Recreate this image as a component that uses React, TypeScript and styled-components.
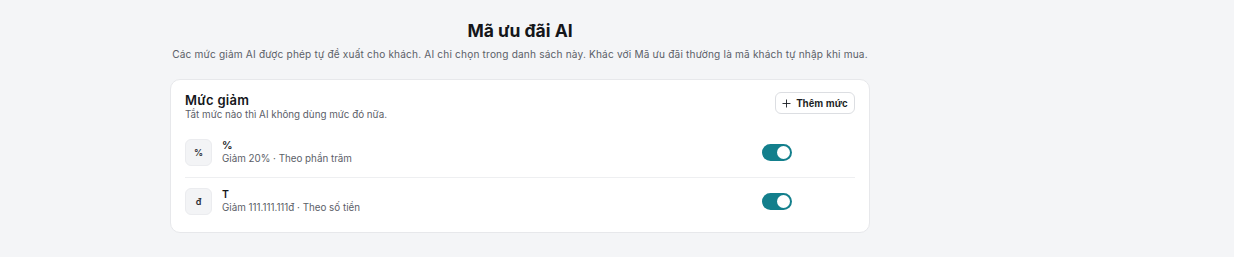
import React from "react";
import styled, { createGlobalStyle } from "styled-components";

const Global = createGlobalStyle`
  html, body { margin: 0; padding: 0; background: #f4f5f7; }
  body { font-family: Inter, "Noto Sans", sans-serif; color: #111827; }
  * { box-sizing: border-box; }
`;

const Page = styled.div`
  width: 1234px;
  height: 257px;
  padding: 20px 0 0 170px;
`;

const Column = styled.div`
  width: 700px;
  display: flex;
  flex-direction: column;
`;

const Title = styled.h1`
  margin: 0;
  text-align: center;
  font-size: 17.5px;
  line-height: 22px;
  font-weight: 700;
  color: #14161a;
`;

const Subtitle = styled.p`
  margin: 5px 0 0;
  text-align: center;
  font-size: 10.1px;
  letter-spacing: 0.18px;
  line-height: 14px;
  color: #5b6068;
  white-space: nowrap;
`;

const Card = styled.section`
  margin-top: 18px;
  background: #ffffff;
  border: 1px solid #e7e8eb;
  border-radius: 10px;
  padding: 12px 14px 6px 14px;
`;

const Header = styled.div`
  display: flex;
  justify-content: space-between;
  align-items: flex-start;
`;

const HeaderText = styled.div`
  display: flex;
  flex-direction: column;
`;

const CardTitle = styled.h2`
  margin: 0;
  font-size: 13px;
  line-height: 16px;
  font-weight: 600;
  color: #14161a;
  letter-spacing: 0.3px;
`;

const CardSub = styled.p`
  margin: 0;
  font-size: 9.8px;
  line-height: 14px;
  color: #5b6068;
`;

const AddButton = styled.button`
  display: flex;
  align-items: center;
  gap: 5px;
  height: 22px;
  width: 80px;
  justify-content: center;
  background: #fff;
  border: 1px solid #dcdee2;
  border-radius: 6px;
  font-family: "Liberation Sans", Arial, sans-serif;
  font-size: 10px;
  font-weight: 700;
  color: #1a1d24;
  padding: 0;
`;

const List = styled.div`
  margin-top: 7px;
  display: flex;
  flex-direction: column;
`;

const Row = styled.div<{ $last?: boolean }>`
  display: flex;
  align-items: center;
  gap: 10px;
  padding: 10px 0 11px;
  border-bottom: ${(p) => (p.$last ? "none" : "1px solid #eeeff1")};
`;

const IconBox = styled.div`
  width: 27px;
  height: 27px;
  border-radius: 6px;
  background: #f3f4f6;
  border: 1px solid #ebecef;
  display: flex;
  align-items: center;
  justify-content: center;
  font-size: 9px;
  font-weight: 600;
  color: #2a2d33;
`;

const RowText = styled.div`
  flex: 1;
  display: flex;
  flex-direction: column;
`;

const RowTitle = styled.div`
  font-size: 10.5px;
  line-height: 13px;
  font-weight: 600;
  color: #14161a;
`;

const RowSub = styled.div`
  font-size: 9.8px;
  line-height: 14px;
  color: #5b6068;
`;

const Toggle = styled.div<{ $on: boolean }>`
  width: 30px;
  height: 17px;
  border-radius: 9px;
  background: ${(p) => (p.$on ? "#137f8c" : "#d1d5db")};
  display: flex;
  align-items: center;
  justify-content: ${(p) => (p.$on ? "flex-end" : "flex-start")};
  padding: 0 2px;
`;

const Knob = styled.div`
  width: 13px;
  height: 13px;
  border-radius: 50%;
  background: #fff;
`;

const Actions = styled.div`
  width: 53px;
`;

const PlusIcon = () => (
  <svg width="9" height="9" viewBox="0 0 10 10" fill="none" stroke="#1a1d24" strokeWidth="1" strokeLinecap="round">
    <path d="M5 1v8M1 5h8" />
  </svg>
);

const items = [
  { icon: "%", title: "%", sub: "Giảm 20% · Theo phần trăm", on: true },
  { icon: "đ", title: "T", sub: "Giảm 111.111.111đ · Theo số tiền", on: true },
];

export default function App() {
  return (
    <>
      <Global />
      <Page>
        <Column>
          <Title>Mã ưu đãi AI</Title>
          <Subtitle>
            Các mức giảm AI được phép tự đề xuất cho khách. AI chỉ chọn trong danh sách này. Khác với Mã ưu đãi thường là mã khách tự nhập khi mua.
          </Subtitle>
          <Card>
            <Header>
              <HeaderText>
                <CardTitle>Mức giảm</CardTitle>
                <CardSub>Tắt mức nào thì AI không dùng mức đó nữa.</CardSub>
              </HeaderText>
              <AddButton>
                <PlusIcon />
                Thêm mức
              </AddButton>
            </Header>
            <List>
              {items.map((it, i) => (
                <Row key={i} $last={i === items.length - 1}>
                  <IconBox>{it.icon}</IconBox>
                  <RowText>
                    <RowTitle>{it.title}</RowTitle>
                    <RowSub>{it.sub}</RowSub>
                  </RowText>
                  <Toggle $on={it.on}>
                    <Knob />
                  </Toggle>
                  <Actions />
                </Row>
              ))}
            </List>
          </Card>
        </Column>
      </Page>
    </>
  );
}
